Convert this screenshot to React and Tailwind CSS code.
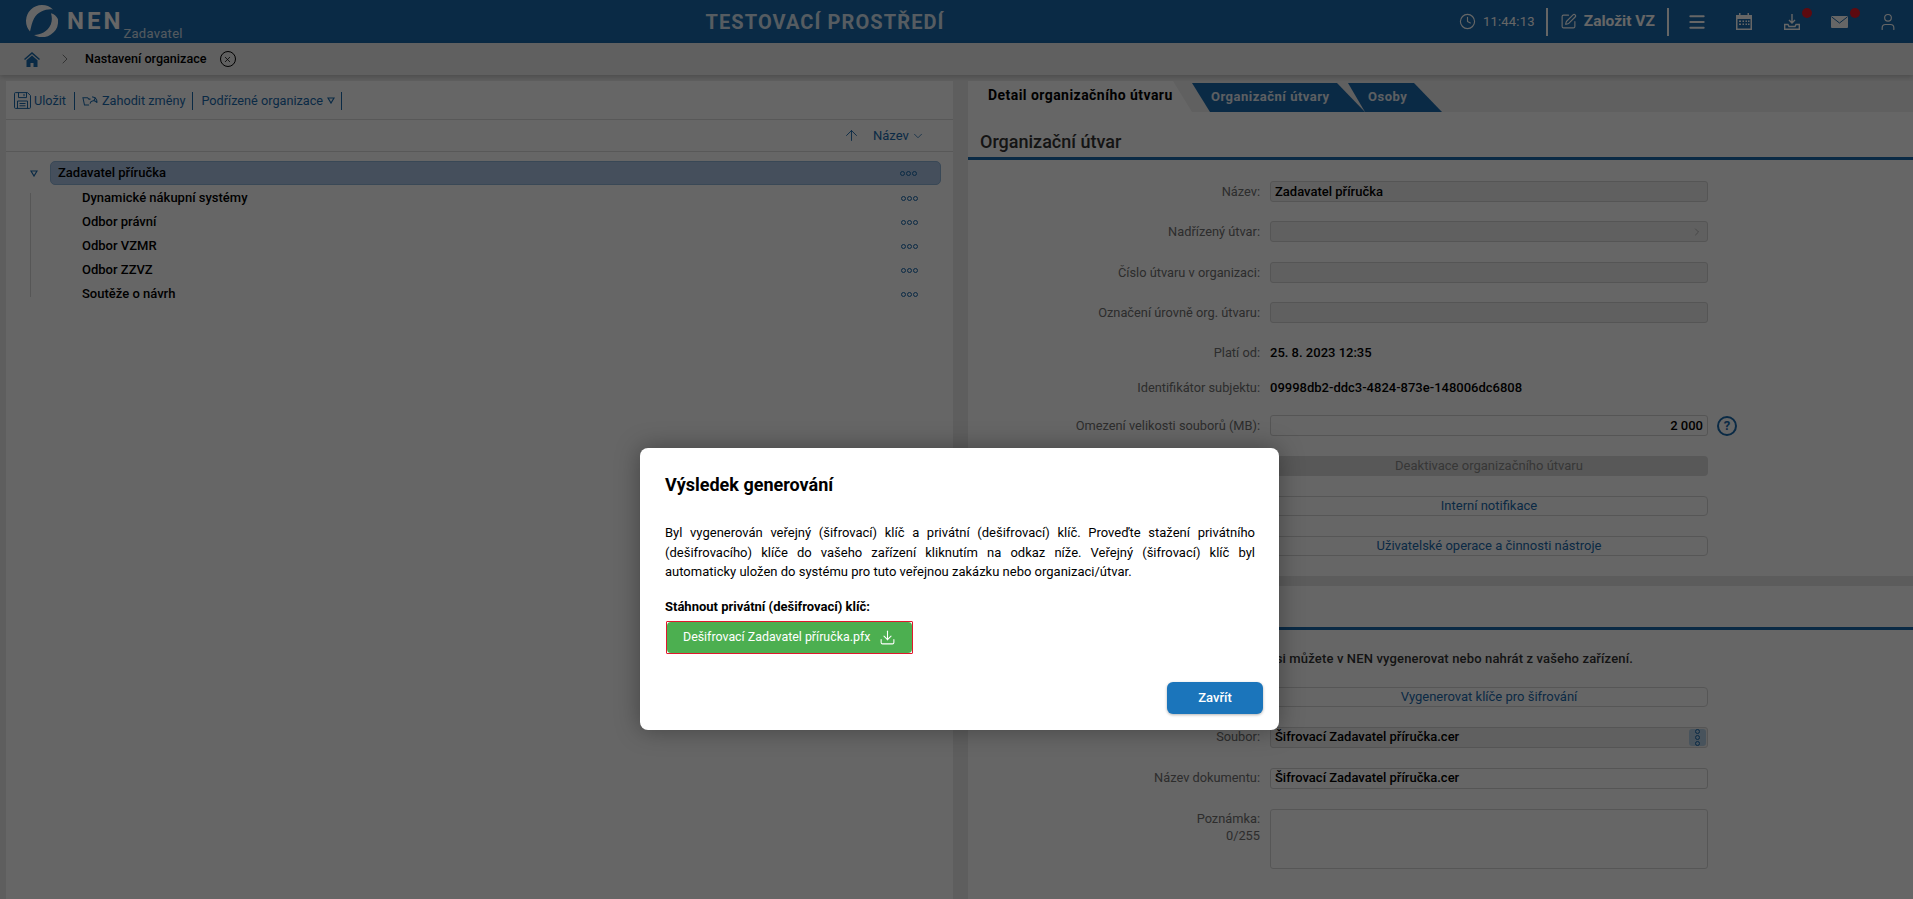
import React from 'react'
import { ArrowUp, ChevronDown, ChevronRight, Clock, Download, Menu, SquarePen, User, X } from 'lucide-react'

const treeChildren = ['Dynamické nákupní systémy', 'Odbor právní', 'Odbor VZMR', 'Odbor ZZVZ', 'Soutěže o návrh']

function Dots({ vertical = false }) {
    return (
        <span className={`flex ${vertical ? 'flex-col gap-[1px]' : 'gap-[1px]'}`}>
            <span className="w-[5px] h-[5px] rounded-full border border-[#1969ac]" />
            <span className="w-[5px] h-[5px] rounded-full border border-[#1969ac]" />
            <span className="w-[5px] h-[5px] rounded-full border border-[#1969ac]" />
        </span>
    )
}

function Triangle({ className = '' }) {
    return (
        <svg viewBox="0 0 8 7" className={`w-[8px] h-[7px] ${className}`} fill="none" stroke="#1969ac" strokeWidth="1.2">
            <path d="M1 1h6L4 6z" />
        </svg>
    )
}

function Logo() {
    return (
        <svg viewBox="0 0 32 32" className="w-[32px] h-[32px] shrink-0" fill="white">
            <path d="M4 26.600A16 16 0 0 1 27 4.400C21 3.500 12 6 8 13.500 6 17.500 5 22 4 26.600z" />
            <path d="M31.900 14A16 16 0 0 1 8 29.900C14 30 21.500 27 24.800 19.500 26.300 15.500 26 11.500 25 8.200 28 9 30.500 11 31.900 14z" />
        </svg>
    )
}

function FormRow({ label, top, children }) {
    return (
        <div className={`flex items-center h-[21px] ${top}`}>
            <div className="w-[302px] pr-[10px] text-right text-[12.800px] text-[#707070]">{label}</div>
            {children}
        </div>
    )
}

function Field({ children, className = '' }) {
    return (
        <div className={`w-[438px] h-[21px] flex items-center px-[4px] rounded-[3px] border border-[#d4d4d4] bg-[#f0f0f0] text-[13px] font-medium text-black truncate ${className}`}>
            {children}
        </div>
    )
}

function LinkButton({ children }) {
    return (
        <div className="w-[438px] h-[20px] flex items-center justify-center rounded-[4px] border border-[#d8d8d8] bg-white text-[13px] text-[#1969ac]">
            {children}
        </div>
    )
}

export default function App() {
    return (
        <div className="relative w-[1913px] h-[899px] overflow-hidden bg-[#ececec] font-['Roboto',sans-serif] text-[13px]">
            {/* header */}
            <header className="flex items-center h-[43px] bg-[#1969ac] text-white">
                <div className="flex items-start w-[200px] h-full pl-[26px] pt-[5px]">
                    <Logo />
                    <span className="ml-[9px] mt-[1px] text-[24px] leading-[30px] font-bold tracking-[3px]">NEN</span>
                    <span className="mt-[21px] text-[13px] leading-[16px] tracking-[0.3px] text-white/80">Zadavatel</span>
                </div>
                <div className="w-[1250px] text-center text-[20px] font-bold tracking-[1.100px] text-[#d8e6f2]">TESTOVACÍ PROSTŘEDÍ</div>
                <div className="flex items-center ml-[9px]">
                    <Clock size={17} strokeWidth={1.6} />
                    <span className="ml-[7px] text-[13px] tracking-[0.2px]">11:44:13</span>
                    <span className="w-[2px] h-[28px] ml-[11px] bg-white" />
                    <SquarePen size={17} strokeWidth={1.6} className="ml-[12px]" />
                    <span className="ml-[7px] text-[15.500px] font-bold">Založit VZ</span>
                    <span className="w-[2px] h-[28px] ml-[12px] bg-white" />
                    <Menu size={20} strokeWidth={2.4} className="ml-[18px]" />
                    <svg viewBox="0 0 16 17" className="w-[16px] h-[17px] ml-[29px]" fill="white">
                        <path d="M3 0h1.500v2h7V0H13v2h3v15H0V2h3zM1.500 6v9.500h13V6zM3 7.500h2v1.500H3zm3.500 0h1.500v1.500H6.500zm3 0h1.500v1.500H9.500zm2.500 0h1.500v1.500H12zM3 10.500h2V12H3zm3.500 0h1.500V12H6.500zm3 0h1.500V12H9.500zm2.500 0h1.500V12H12z" />
                    </svg>
                    <div className="relative ml-[32px]">
                        <svg viewBox="0 0 16 16" className="w-[16px] h-[16px]" fill="none" stroke="white" strokeWidth="1.400">
                            <path d="M8 0v9M5 6l3 3 3-3M.7 10.500h3.300l1 2h6l1-2h3.300v4.800H.7z" />
                        </svg>
                        <span className="absolute -top-[6px] left-[18px] w-[10px] h-[10px] rounded-full bg-[#e61928]" />
                    </div>
                    <div className="relative ml-[31px]">
                        <svg viewBox="0 0 17 12" className="w-[17px] h-[12px]">
                            <rect width="17" height="12" rx="1" fill="white" />
                            <path d="M.5 .8 8.500 7 16.500 .8" fill="none" stroke="#1969ac" strokeWidth="1" />
                        </svg>
                        <span className="absolute -top-[8px] left-[19px] w-[10px] h-[10px] rounded-full bg-[#e61928]" />
                    </div>
                    <User size={20} strokeWidth={1.4} className="ml-[30px]" />
                </div>
            </header>

            {/* breadcrumb */}
            <div className="flex items-center h-[32px] bg-[#f0f0f0] shadow-[0_2px_5px_rgba(0,0,0,0.2)]">
                <svg viewBox="0 0 16 15" className="w-[16px] h-[15px] ml-[24px]" fill="#1969ac">
                    <path d="M8 0 0 7l1 1 7-6 7 6 1-1zM8 3.500 2.500 8.200V15h4v-4h3v4h4V8.200z" />
                </svg>
                <ChevronRight size={16} strokeWidth={1} className="ml-[17px] text-[#444]" />
                <span className="ml-[12px] text-[12.600px] font-medium text-black">Nastavení organizace</span>
                <span className="flex items-center justify-center w-[16px] h-[16px] ml-[13px] rounded-full border border-black">
                    <X size={9} strokeWidth={2} className="text-black" />
                </span>
            </div>

            {/* content */}
            <main className="flex h-[824px] pt-[6px] pl-[6px]">
                <section className="w-[947px] h-full bg-white">
                    <div className="flex items-center h-[39px] pt-px border-b border-[#dcdcdc] text-[12.700px] text-[#1969ac]">
                        <svg viewBox="0 0 17 17" className="w-[17px] h-[17px] ml-[8px]" fill="none" stroke="#1969ac" strokeWidth="1">
                            <path d="M1.500.6h12l3 3v11.800a1 1 0 0 1-1 1h-14a1 1 0 0 1-1-1V1.600a1 1 0 0 1 1-1zM4.500.6v5h8v-5M10 2v2.200M3.500 16.400V9h10v7.400M5.500 11.500h6M5.500 13.800h6" />
                        </svg>
                        <span className="ml-[3px]">Uložit</span>
                        <span className="w-px h-[18px] ml-[8px] bg-[#1969ac]" />
                        <svg viewBox="0 0 17 12" className="w-[16px] h-[11px] ml-[7px]" fill="none" stroke="#1969ac" strokeWidth="1.100">
                            <path d="M7.500 11H2.500L.8 3h5l1.500 1.500h1.700M8.500 9.500a4 4 0 0 1 7.500-1M10.800 1.800 14.200 3 12.800 6.300M14.200 3c1.500 1.500 2.200 3 2 5.500" />
                        </svg>
                        <span className="ml-[4px]">Zahodit změny</span>
                        <span className="w-px h-[18px] ml-[7px] bg-[#1969ac]" />
                        <span className="ml-[8px]">Podřízené organizace</span>
                        <Triangle className="ml-[4px]" />
                        <span className="w-px h-[18px] ml-[6px] bg-[#1969ac]" />
                    </div>
                    <div className="flex items-center h-[32px] border-b border-[#dcdcdc] text-[#1969ac]">
                        <ArrowUp size={17} strokeWidth={1.3} className="ml-[837px]" />
                        <span className="ml-[13px]">Název</span>
                        <ChevronDown size={14} strokeWidth={1.3} className="ml-[2px]" />
                    </div>
                    <div className="relative pt-[9px] pl-[24px]">
                        <Triangle className="absolute left-[24px] top-[18px]" />
                        <span className="absolute left-[24px] top-[41px] w-px h-[104px] bg-[#d8d8d8]" />
                        <div className="flex items-center justify-between h-[24px] ml-[20px] w-[891px] pl-[7px] pr-[23px] rounded-[5px] border border-[#8fb3d8] bg-[#acc6e6] font-medium text-black">
                            Zadavatel příručka
                            <Dots />
                        </div>
                        <div className="pt-px">
                            {treeChildren.map((name) => (
                                <div key={name} className="flex items-center justify-between h-[24px] ml-[20px] w-[891px] pl-[32px] pr-[23px] font-medium text-black">
                                    {name}
                                    <Dots />
                                </div>
                            ))}
                        </div>
                    </div>
                </section>

                <section className="w-[945px] ml-[15px] h-full bg-white">
                    <div className="flex h-[31px] bg-[#f0f0f0]">
                        <div className="w-[224px] h-full pl-[20px] pt-[4px] bg-white text-[14px] font-bold tracking-[0.45px] text-black [clip-path:polygon(0_0,205px_0,100%_100%,0_100%)]">
                            Detail organizačního útvaru
                        </div>
                        <div className="w-[173px] h-[29px] mt-[2px] pl-[19px] pt-[4px] bg-[#1969ac] text-[13px] font-bold text-[#e8eef4] tracking-[0.5px] [clip-path:polygon(0_0,145px_0,100%_100%,18px_100%)]">
                            Organizační útvary
                        </div>
                        <div className="w-[94px] h-[29px] mt-[2px] -ml-[17px] pl-[20px] pt-[4px] bg-[#1969ac] text-[13px] font-bold text-[#e8eef4] tracking-[0.5px] [clip-path:polygon(0_0,66px_0,100%_100%,17px_100%)]">
                            Osoby
                        </div>
                    </div>
                    <div className="h-[48px] pt-[18px] pl-[12px] border-b-[3px] border-[#1969ac] text-[18px] leading-[24px] font-medium text-[#333]">
                        Organizační útvar
                    </div>
                    <FormRow label="Název:" top="mt-[21px]"><Field>Zadavatel příručka</Field></FormRow>
                    <FormRow label="Nadřízený útvar:" top="mt-[19px]">
                        <Field className="justify-end"><ChevronRight size={12} strokeWidth={1.2} className="text-[#888]" /></Field>
                    </FormRow>
                    <FormRow label="Číslo útvaru v organizaci:" top="mt-[20px]"><Field /></FormRow>
                    <FormRow label="Označení úrovně org. útvaru:" top="mt-[19px]"><Field /></FormRow>
                    <FormRow label="Platí od:" top="mt-[19px]">
                        <span className="font-medium text-black">25. 8. 2023 12:35</span>
                    </FormRow>
                    <FormRow label="Identifikátor subjektu:" top="mt-[14px]">
                        <span className="font-medium text-black">09998db2-ddc3-4824-873e-148006dc6808</span>
                    </FormRow>
                    <FormRow label="Omezení velikosti souborů (MB):" top="mt-[17px]">
                        <Field className="justify-end bg-white">2 000</Field>
                        <span className="flex items-center justify-center w-[20px] h-[20px] ml-[9px] rounded-full border-2 border-[#1969ac] text-[13px] font-bold text-[#1969ac]">?</span>
                    </FormRow>
                    <div className="flex mt-[20px] pl-[302px]">
                        <div className="w-[438px] h-[20px] flex items-center justify-center rounded-[4px] bg-[#dcdcdc] text-[#8a8a8a]">Deaktivace organizačního útvaru</div>
                    </div>
                    <div className="flex mt-[20px] pl-[302px]"><LinkButton>Interní notifikace</LinkButton></div>
                    <div className="flex mt-[20px] pl-[302px]"><LinkButton>Uživatelské operace a činnosti nástroje</LinkButton></div>
                    <div className="h-[10px] mt-[20px] bg-[#e6e6e6]" />
                    <div className="h-[44px] border-b-[3px] border-[#1969ac]" />
                    <div className="mt-[19px] pr-[280px] text-right font-medium text-[#333] tracking-[0.15px]">
                        Veřejný (šifrovací) klíč si můžete v NEN vygenerovat nebo nahrát z vašeho zařízení.
                    </div>
                    <div className="flex mt-[18px] pl-[302px]"><LinkButton>Vygenerovat klíče pro šifrování</LinkButton></div>
                    <FormRow label="Soubor:" top="mt-[20px]">
                        <Field className="relative bg-[#c6e4e6] border-[#b4d4d8] text-[12.700px]">
                            Šifrovací Zadavatel příručka.cer
                            <span className="absolute right-[1px] top-[1px] flex items-center justify-center w-[17px] h-[17px] rounded-[3px] bg-[#b4cfe6]"><Dots vertical /></span>
                        </Field>
                    </FormRow>
                    <FormRow label="Název dokumentu:" top="mt-[20px]"><Field className="bg-white">Šifrovací Zadavatel příručka.cer</Field></FormRow>
                    <div className="flex mt-[20px]">
                        <div className="w-[302px] pr-[10px] pt-[1px] text-right text-[12.800px] leading-[17px] text-[#707070]">
                            <div>Poznámka:</div>
                            <div>0/255</div>
                        </div>
                        <div className="w-[438px] h-[60px] rounded-[3px] border border-[#d8d8d8] bg-white" />
                    </div>
                </section>
            </main>

            {/* modal */}
            <div className="absolute inset-0 bg-black/60" />
            <div className="absolute left-[640px] top-[448px] w-[639px] h-[282px] rounded-[8px] bg-white px-[25px] pt-[25px] shadow-[0_0_25px_rgba(0,0,0,0.35)]">
                <h2 className="text-[18px] leading-[24px] font-bold text-black">Výsledek generování</h2>
                <p className="w-[590px] mt-[26px] text-[13px] leading-[19.500px] text-justify text-black">
                    Byl vygenerován veřejný (šifrovací) klíč a privátní (dešifrovací) klíč. Proveďte stažení privátního (dešifrovacího) klíče do vašeho zařízení kliknutím na odkaz níže. Veřejný (šifrovací) klíč byl automaticky uložen do systému pro tuto veřejnou zakázku nebo organizaci/útvar.
                </p>
                <div className="mt-[15px] text-[13px] leading-[19px] font-bold text-black">Stáhnout privátní (dešifrovací) klíč:</div>
                <div className="flex items-center w-[247px] h-[33px] mt-[5px] ml-[1px] pl-[16px] border border-[#e0182d] rounded-[1px]">
                    <div className="absolute left-[27px] w-[245px] h-[31px] rounded-[4px] bg-[#4caf50]" />
                    <span className="relative text-[12.400px] text-white">Dešifrovací Zadavatel příručka.pfx</span>
                    <Download size={17} strokeWidth={1.5} className="relative ml-[9px] text-white" />
                </div>
                <div className="flex justify-end mt-[28px] -mr-[9px]">
                    <button className="w-[96px] h-[32px] rounded-[6px] bg-[#1b75bb] text-[13px] font-medium text-white shadow-[0_1px_3px_rgba(0,0,0,0.3)]">Zavřít</button>
                </div>
            </div>
        </div>
    )
}
